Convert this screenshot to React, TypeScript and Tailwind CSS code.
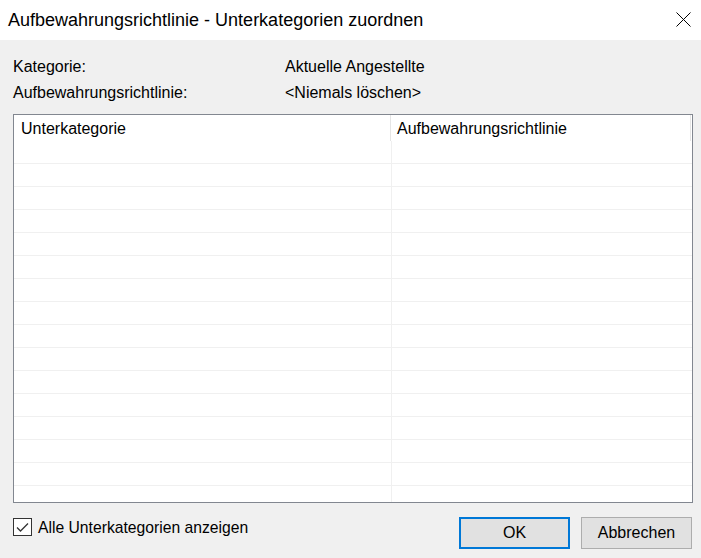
import React from 'react';

const rows = Array.from({ length: 16 }, (_, i) => i);

export default function App() {
  return (
    <div
      className="flex h-[558px] w-[701px] flex-col overflow-hidden bg-[#f0f0f0] text-[16px] text-black"
      style={{ fontFamily: '"Liberation Sans", Arial, sans-serif' }}
    >
      {/* title bar */}
      <div className="flex h-[40px] items-center justify-between bg-white pl-[8px] pr-[10px]">
        <span className="text-[18px] leading-none">Aufbewahrungsrichtlinie - Unterkategorien zuordnen</span>
        <svg width="15" height="15" viewBox="0 0 15 15" className="mb-[2px]">
          <path d="M0.5 0.5 L14.5 14.5 M14.5 0.5 L0.5 14.5" stroke="#000" strokeWidth="1" />
        </svg>
      </div>

      <div className="flex flex-col pl-[13px] pr-[9px] pt-[14px]">
        <div className="grid grid-cols-[272px_1fr]">
          <div className="flex h-[26px] items-center">Kategorie:</div>
          <div className="flex h-[26px] items-center">Aktuelle Angestellte</div>
          <div className="flex h-[26px] items-center">Aufbewahrungsrichtlinie:</div>
          <div className="flex h-[26px] items-center">&lt;Niemals löschen&gt;</div>
        </div>

        {/* list view */}
        <div className="mt-[8px] h-[389px] w-[680px] overflow-hidden border border-[#828790] bg-white">
          <div className="flex h-[26px]">
            <div className="flex w-[376px] items-center pl-[7px] pt-[2px]">Unterkategorie</div>
            <div className="w-px bg-[#e5e5e5]" />
            <div className="flex flex-1 items-center pl-[6px] pt-[2px]">Aufbewahrungsrichtlinie</div>
            <div className="mr-px w-px bg-[#e5e5e5]" />
          </div>
          {rows.map((r) => (
            <div key={r} className="flex h-[23px] border-b border-[#f0f0f0]">
              <div className="w-[378px] border-r border-[#f0f0f0]" />
              <div className="flex-1" />
            </div>
          ))}
        </div>

        {/* footer */}
        <div className="mt-[14px] flex items-start justify-between">
          <label className="flex items-center gap-[6px]">
            <span className="flex h-[18px] w-[19px] items-center justify-center border border-[#333] bg-white">
              <svg width="13" height="11" viewBox="0 0 13 11">
                <path d="M1 5.5 L4.5 9 L12 1.5" fill="none" stroke="#333" strokeWidth="1.3" />
              </svg>
            </span>
            <span className="pt-[2px] text-[15.7px] leading-[18px]">Alle Unterkategorien anzeigen</span>
          </label>
          <div className="flex gap-[11px]">
            <button className="h-[32px] w-[111px] border-2 border-[#0078d7] bg-[#e1e1e1]">OK</button>
            <button className="h-[32px] w-[111px] border border-[#adadad] bg-[#e1e1e1]">Abbrechen</button>
          </div>
        </div>
      </div>
    </div>
  );
}
